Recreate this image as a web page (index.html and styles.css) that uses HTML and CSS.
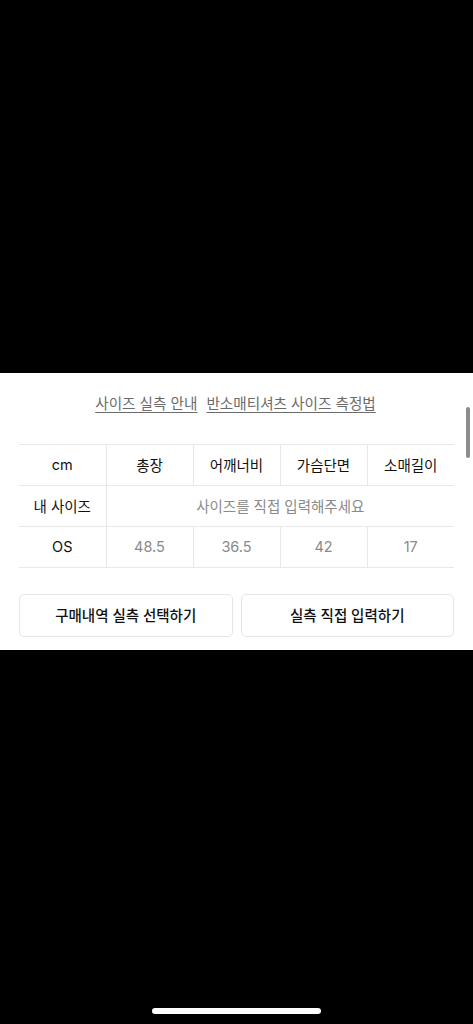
FILE: index.html
```html
<!DOCTYPE html>
<html lang="ko">
<head>
<meta charset="utf-8">
<title>사이즈</title>
<link rel="stylesheet" href="styles.css">
</head>
<body>
<div class="screen">
  <div class="top"></div>
  <div class="sheet">
    <div class="links">
      <a class="link">사이즈 실측 안내</a>
      <a class="link">반소매티셔츠 사이즈 측정법</a>
    </div>
    <table class="size-table">
      <tr>
        <td class="head">cm</td>
        <td class="head">총장</td>
        <td class="head">어깨너비</td>
        <td class="head">가슴단면</td>
        <td class="head">소매길이</td>
      </tr>
      <tr>
        <td class="head">내 사이즈</td>
        <td class="muted" colspan="4">사이즈를 직접 입력해주세요</td>
      </tr>
      <tr>
        <td class="head">OS</td>
        <td class="muted">48.5</td>
        <td class="muted">36.5</td>
        <td class="muted">42</td>
        <td class="muted">17</td>
      </tr>
    </table>
    <div class="actions">
      <button class="btn">구매내역 실측 선택하기</button>
      <button class="btn">실측 직접 입력하기</button>
    </div>
    <div class="scrollbar"></div>
  </div>
  <div class="bottom">
    <div class="home-indicator"></div>
  </div>
</div>
</body>
</html>
```

FILE: styles.css
```css
* { box-sizing: border-box; }
html, body { margin: 0; padding: 0; background: #000; }
body {
  font-family: "Inter", "Noto Sans CJK KR", "Noto Sans", sans-serif;
  -webkit-font-smoothing: antialiased;
}
.screen {
  width: 473px;
  height: 1024px;
  display: flex;
  flex-direction: column;
  background: #000;
}
.top { height: 373px; flex: none; }
.sheet {
  position: relative;
  height: 277px;
  flex: none;
  background: #fff;
  padding: 21px 19px 0 19px;
}
.links {
  display: flex;
  justify-content: center;
  gap: 9px;
  height: 20px;
  line-height: 20px;
  font-size: 14.6px;
  padding-right: 2px;
}
.link {
  color: #6b6b6b;
  text-decoration: underline;
  text-underline-offset: 3px;
  text-decoration-thickness: 1px;
}
.size-table {
  margin-top: 30px;
  width: 435px;
  border-collapse: collapse;
  table-layout: fixed;
}
.size-table td {
  height: 41px;
  text-align: center;
  vertical-align: middle;
  font-size: 14.5px;
  padding: 0 0 2px 0;
  border-top: 1px solid #e8e8e8;
  border-bottom: 1px solid #e8e8e8;
  border-left: 1px solid #e8e8e8;
}
.size-table td:first-child { border-left: none; }
.head { color: #111; }
.muted { color: #8a8a8a; }
.actions {
  margin-top: 26px;
  display: flex;
  gap: 8px;
}
.btn {
  flex: 1;
  height: 43px;
  background: #fff;
  border: 1px solid #e6e6e6;
  border-radius: 5px;
  font-family: inherit;
  font-size: 14.5px;
  font-weight: 500;
  color: #111;
  padding: 0 0 2px 0;
}
.scrollbar {
  position: absolute;
  right: 3px;
  top: 34px;
  width: 4px;
  height: 51px;
  border-radius: 2px;
  background: #8c8c8c;
}
.bottom {
  flex: 1;
  display: flex;
  justify-content: center;
  align-items: flex-end;
  padding-bottom: 10px;
}
.home-indicator {
  width: 169px;
  height: 6px;
  border-radius: 3px;
  background: #fff;
}
```
